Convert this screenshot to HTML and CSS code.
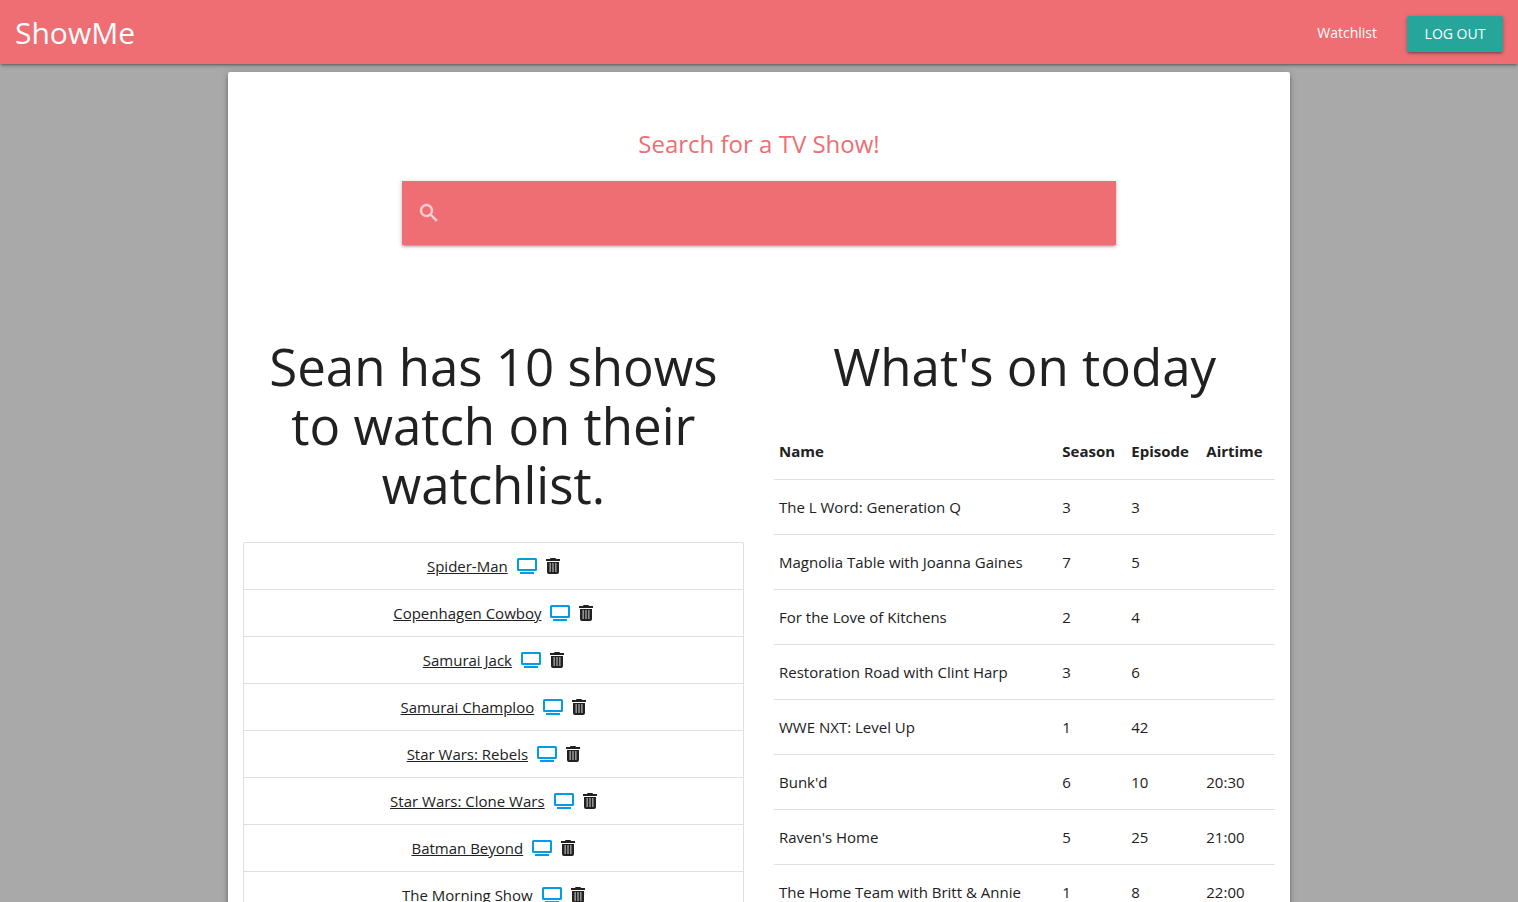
FILE: index.html
```html
<!DOCTYPE html>
<html lang="en">
<head>
<meta charset="utf-8">
<meta name="viewport" content="width=device-width, initial-scale=1">
<title>ShowMe</title>
<link rel="stylesheet" href="styles.css">
</head>
<body>
<svg class="sprite" aria-hidden="true">
  <symbol id="tv" viewBox="0 0 20 16"><path fill-rule="evenodd" d="M1.5 0h17A1.5 1.5 0 0 1 20 1.500v10a1.500 1.500 0 0 1-1.500 1.500h-17A1.500 1.500 0 0 1 0 11.500v-10A1.500 1.500 0 0 1 1.500 0zM2 2v9h16V2zM3 14h14v2H3z"/></symbol>
  <symbol id="trash" viewBox="0 0 14 16"><path fill-rule="evenodd" d="M5 0h4a1 1 0 0 1 1 1h4v2H0V1h4a1 1 0 0 1 1-1zM1 4h12v10a2 2 0 0 1-2 2H3a2 2 0 0 1-2-2zM3.700 5v9h.8V5zM6.600 5v9h.8V5zM9.500 5v9h.8V5z"/></symbol>
</svg>
<header class="navbar">
  <a class="brand" href="#">ShowMe</a>
  <nav class="nav-links">
    <a class="nav-link" href="#watchlist">Watchlist</a>
    <button class="logout" type="button">LOG OUT</button>
  </nav>
</header>
<main class="panel">
  <form class="search">
    <label class="search-title" for="search">Search for a TV Show!</label>
    <div class="search-bar">
      <svg class="search-icon" viewBox="0 0 24 24" aria-hidden="true"><path d="M15.500 14h-.79l-.28-.27A6.471 6.471 0 0 0 16 9.500 6.500 6.500 0 1 0 9.500 16c1.610 0 3.090-.59 4.230-1.570l.27.28v.79l5 4.990L20.490 19l-4.990-5zm-6 0C7.010 14 5 11.990 5 9.500S7.010 5 9.500 5 14 7.010 14 9.500 11.990 14 9.500 14z"/></svg>
      <input class="search-input" id="search" type="search">
    </div>
  </form>
  <div class="columns">
    <section class="column" id="watchlist">
      <h2 class="heading">Sean has 10 shows to watch on their watchlist.</h2>
      <ul class="shows">
        <li class="show"><a class="show-name" href="#">Spider-Man</a><button class="icon-button" type="button" aria-label="View show"><svg class="tv"><use href="#tv"/></svg></button><button class="icon-button" type="button" aria-label="Remove show"><svg class="trash"><use href="#trash"/></svg></button></li>
        <li class="show"><a class="show-name" href="#">Copenhagen Cowboy</a><button class="icon-button" type="button" aria-label="View show"><svg class="tv"><use href="#tv"/></svg></button><button class="icon-button" type="button" aria-label="Remove show"><svg class="trash"><use href="#trash"/></svg></button></li>
        <li class="show"><a class="show-name" href="#">Samurai Jack</a><button class="icon-button" type="button" aria-label="View show"><svg class="tv"><use href="#tv"/></svg></button><button class="icon-button" type="button" aria-label="Remove show"><svg class="trash"><use href="#trash"/></svg></button></li>
        <li class="show"><a class="show-name" href="#">Samurai Champloo</a><button class="icon-button" type="button" aria-label="View show"><svg class="tv"><use href="#tv"/></svg></button><button class="icon-button" type="button" aria-label="Remove show"><svg class="trash"><use href="#trash"/></svg></button></li>
        <li class="show"><a class="show-name" href="#">Star Wars: Rebels</a><button class="icon-button" type="button" aria-label="View show"><svg class="tv"><use href="#tv"/></svg></button><button class="icon-button" type="button" aria-label="Remove show"><svg class="trash"><use href="#trash"/></svg></button></li>
        <li class="show"><a class="show-name" href="#">Star Wars: Clone Wars</a><button class="icon-button" type="button" aria-label="View show"><svg class="tv"><use href="#tv"/></svg></button><button class="icon-button" type="button" aria-label="Remove show"><svg class="trash"><use href="#trash"/></svg></button></li>
        <li class="show"><a class="show-name" href="#">Batman Beyond</a><button class="icon-button" type="button" aria-label="View show"><svg class="tv"><use href="#tv"/></svg></button><button class="icon-button" type="button" aria-label="Remove show"><svg class="trash"><use href="#trash"/></svg></button></li>
        <li class="show"><a class="show-name" href="#">The Morning Show</a><button class="icon-button" type="button" aria-label="View show"><svg class="tv"><use href="#tv"/></svg></button><button class="icon-button" type="button" aria-label="Remove show"><svg class="trash"><use href="#trash"/></svg></button></li>
      </ul>
    </section>
    <section class="column">
      <h2 class="heading">What's on today</h2>
      <table class="schedule">
        <colgroup><col><col class="col-season"><col class="col-episode"><col class="col-airtime"></colgroup>
        <thead><tr><th>Name</th><th>Season</th><th>Episode</th><th>Airtime</th></tr></thead>
        <tbody>
          <tr><td>The L Word: Generation Q</td><td>3</td><td>3</td><td></td></tr>
          <tr><td>Magnolia Table with Joanna Gaines</td><td>7</td><td>5</td><td></td></tr>
          <tr><td>For the Love of Kitchens</td><td>2</td><td>4</td><td></td></tr>
          <tr><td>Restoration Road with Clint Harp</td><td>3</td><td>6</td><td></td></tr>
          <tr><td>WWE NXT: Level Up</td><td>1</td><td>42</td><td></td></tr>
          <tr><td>Bunk'd</td><td>6</td><td>10</td><td>20:30</td></tr>
          <tr><td>Raven's Home</td><td>5</td><td>25</td><td>21:00</td></tr>
          <tr><td>The Home Team with Britt &amp; Annie</td><td>1</td><td>8</td><td>22:00</td></tr>
        </tbody>
      </table>
    </section>
  </div>
</main>
</body>
</html>
```
FILE: styles.css
```css
*, *::before, *::after { box-sizing: border-box; }

body {
  margin: 0;
  background: #a9a9a9;
  color: #212121;
  font-family: "Segoe UI", "Open Sans", "Noto Sans", sans-serif;
  font-size: 15px;
  line-height: 24px;
}

.sprite { display: none; }

.navbar {
  display: flex;
  align-items: center;
  justify-content: space-between;
  height: 64px;
  padding: 2px 15px 0;
  background: #ee6e73;
  box-shadow: 0 2px 2px 0 rgba(0, 0, 0, .14), 0 3px 1px -2px rgba(0, 0, 0, .12), 0 1px 5px 0 rgba(0, 0, 0, .2);
}

.brand, .nav-link { color: #fff; text-decoration: none; }
.brand { font-size: 30px; line-height: 40px; }
.nav-links { display: flex; align-items: center; gap: 30px; }
.nav-link { font-size: 14px; line-height: 24px; }

.logout {
  min-width: 96px;
  height: 36px;
  margin-top: 2px;
  padding: 0 16px;
  border: 0;
  border-radius: 2px;
  background: #26a69a;
  color: #fff;
  font: inherit;
  font-size: 14px;
  line-height: 36px;
  box-shadow: 0 2px 2px 0 rgba(0, 0, 0, .14), 0 3px 1px -2px rgba(0, 0, 0, .12), 0 1px 5px 0 rgba(0, 0, 0, .2);
}

.panel {
  width: 70%;
  margin: 8px auto;
  border-radius: 2px;
  background: #fff;
  box-shadow: 0 4px 5px 0 rgba(0, 0, 0, .14), 0 1px 10px 0 rgba(0, 0, 0, .12), 0 2px 4px -1px rgba(0, 0, 0, .3);
}

.search {
  width: 70%;
  margin: 0 auto;
  padding: 56px 15px 0;
}

.search-title {
  display: block;
  color: #ee6e73;
  font-size: 24px;
  line-height: 32px;
  text-align: center;
}

.search-bar {
  display: flex;
  align-items: center;
  gap: 12px;
  height: 64px;
  margin-top: 21px;
  padding: 0 15px;
  background: #ee6e73;
  box-shadow: 0 2px 2px 0 rgba(0, 0, 0, .14), 0 3px 1px -2px rgba(0, 0, 0, .12), 0 1px 5px 0 rgba(0, 0, 0, .2);
}

.search-icon {
  width: 24px;
  height: 24px;
  fill: #fff;
  stroke: #fff;
  stroke-width: .4;
  opacity: .7;
}

.search-input {
  flex: 1;
  height: 64px;
  border: 0;
  outline: 0;
  background: transparent;
  color: #fff;
  font: inherit;
}

.columns { display: grid; grid-template-columns: 1fr 1fr; margin-top: 92px; }
.column { padding: 0 15px; }

.heading {
  margin: 0 0 28px;
  font-size: 51px;
  font-weight: 400;
  line-height: 59px;
  text-align: center;
}

.shows {
  margin: 0;
  padding: 0;
  border: 1px solid #e0e0e0;
  border-bottom: 0;
  border-radius: 2px;
  list-style: none;
}

.show {
  display: flex;
  align-items: center;
  justify-content: center;
  gap: 9px;
  height: 47px;
  border-bottom: 1px solid #e0e0e0;
}

.show-name { color: inherit; text-underline-offset: 1px; }
.icon-button { display: flex; padding: 0; border: 0; background: none; color: inherit; }
.tv { width: 20px; height: 16px; fill: #039be5; }
.trash { width: 14px; height: 16px; fill: currentColor; }

.schedule { width: 100%; border-collapse: collapse; table-layout: fixed; }
.schedule tr { border-bottom: 1px solid #e0e0e0; }
.schedule th, .schedule td { height: 55px; padding: 0 5px; text-align: left; }
.col-season { width: 69px; }
.col-episode { width: 75px; }
.col-airtime { width: 74px; }
```
